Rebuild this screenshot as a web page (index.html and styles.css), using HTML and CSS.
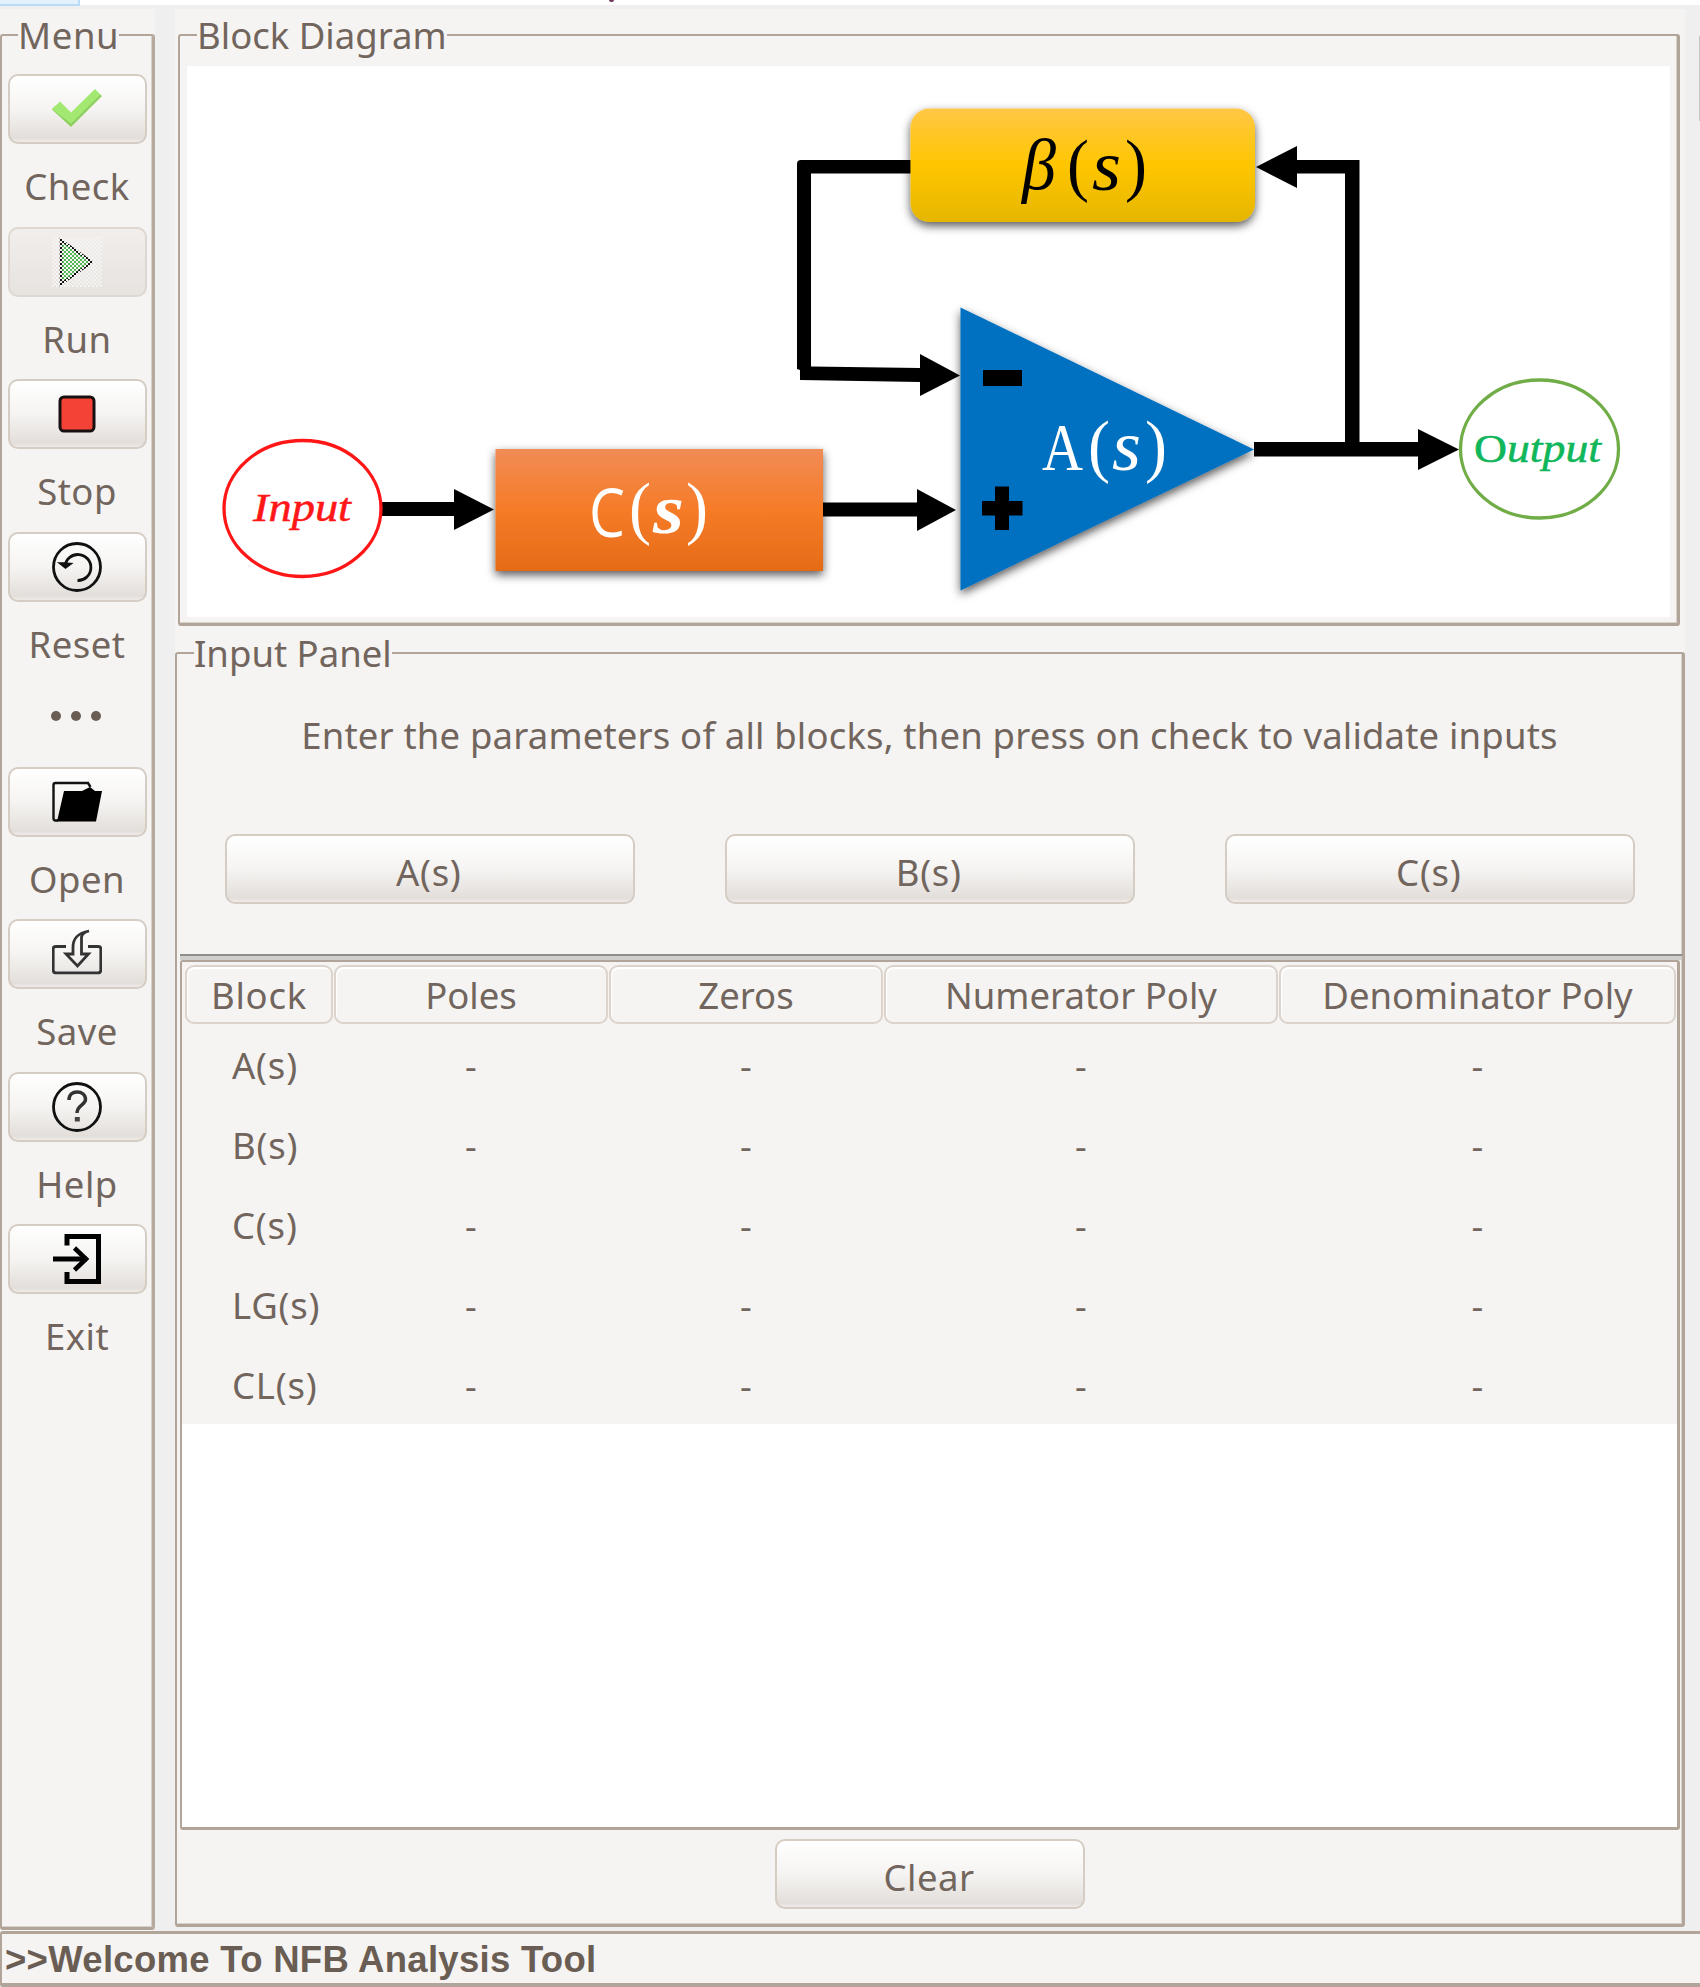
FILE: index.html
```html
<!DOCTYPE html>
<html lang="en">
<head>
<meta charset="utf-8">
<title>NFB Analysis Tool</title>
<link rel="stylesheet" href="styles.css">
</head>
<body>
<div class="app">
  <header class="tabbar"><span class="tab"></span><span class="tab-mark"></span></header>
  <div class="workspace">
    <aside class="side">
      <fieldset class="panel menu">
        <legend class="legend-menu">Menu</legend>
        <div class="item">
          <button class="btn"><svg width="50" height="50" viewBox="0 0 50 50"><path d="M19 43L50 12L46 9L19 35L3 22L0 25.500Z" fill="#8fcf62"/><path d="M0 25L8 17.500L19 28.500L43 5L48.500 10.500L19 39.500Z" fill="#a3e971"/></svg></button>
          <span>Check</span>
        </div>
        <div class="item">
          <button class="btn off"><svg width="50" height="50" viewBox="0 0 50 50"><defs><pattern id="dither" width="4" height="4" patternUnits="userSpaceOnUse"><path d="M0 0h2v2H0zM2 2h2v2H2z" fill="#f5f3f1"/></pattern></defs><path d="M9 3L40 25L9 47Z" fill="#52b956" stroke="#111" stroke-width="2.500"/><rect width="50" height="50" fill="url(#dither)"/></svg></button>
          <span>Run</span>
        </div>
        <div class="item">
          <button class="btn"><svg width="50" height="50" viewBox="0 0 50 50"><rect x="8" y="8" width="34" height="34" rx="4" fill="#f44336" stroke="#181010" stroke-width="3"/></svg></button>
          <span>Stop</span>
        </div>
        <div class="item">
          <button class="btn"><svg width="50" height="50" viewBox="0 0 50 50" fill="none" stroke="#111" stroke-width="2.800"><circle cx="25" cy="25" r="23.500"/><path d="M13 24A13 13 0 1 1 25.500 38.500"/><path d="M7 21L13.500 26L19.500 21.500L12.500 21Z" fill="#111" stroke-width="1.500"/></svg></button>
          <span>Reset</span>
        </div>
        <div class="dots"><i></i><i></i><i></i></div>
        <div class="item">
          <button class="btn"><svg width="50" height="50" viewBox="0 0 50 50"><path d="M6 43.500H3.500Q1.500 43.500 1.500 41.500V8Q1.500 6 3.500 6H36L38.500 10" fill="none" stroke="#111" stroke-width="2.400"/><path d="M12 14H30L38 10L43 14H50L44 44.500H5Z"/></svg></button>
          <span>Open</span>
        </div>
        <div class="item">
          <button class="btn"><svg width="50" height="50" viewBox="0 0 50 50" fill="none" stroke="#333" stroke-width="2.800"><path d="M14 17.500H4Q1.200 17.500 1.200 20V41Q1.200 43.800 4 43.800H46Q48.800 43.800 48.800 41V20Q48.800 17.500 46 17.500H36"/><path d="M37 2C27 4 21 8 21 18V25H14L25.500 37L36.500 25H29.500V8C30 5 33 3 37 2Z"/></svg></button>
          <span>Save</span>
        </div>
        <div class="item">
          <button class="btn"><svg width="50" height="50" viewBox="0 0 50 50" fill="none" stroke="#111"><circle cx="25" cy="25" r="23.500" stroke-width="2.800"/><path d="M17 18C17 12 21 10 25 10C30 10 33.500 13 33.500 17.500C33.500 23 25 23 25 31" stroke="#333" stroke-width="3.500"/><path d="M22.800 35h5v4.500h-5z" fill="#444" stroke="none"/></svg></button>
          <span>Help</span>
        </div>
        <div class="item">
          <button class="btn"><svg width="50" height="50" viewBox="0 0 50 50" fill="none" stroke="#000" stroke-width="5"><path d="M15 11.500V2.500H46.500V47.500H15V38"/><path d="M1 25H35"/><path d="M22.500 14L34 25L22.500 36" stroke-width="4.600"/></svg></button>
          <span>Exit</span>
        </div>
      </fieldset>
    </aside>
    <main class="main">
      <fieldset class="panel diagram">
        <legend class="legend-diagram">Block Diagram</legend>
        <svg class="canvas" width="1483" height="551" viewBox="187 66 1483 551">
          <defs>
            <linearGradient id="gOrange" x1="0" y1="0" x2="0" y2="1"><stop offset="0" stop-color="#f18c55"/><stop offset=".5" stop-color="#f67b28"/><stop offset="1" stop-color="#e56b17"/></linearGradient>
            <linearGradient id="gGold" x1="0" y1="0" x2="0" y2="1"><stop offset="0" stop-color="#ffc746"/><stop offset=".5" stop-color="#ffc600"/><stop offset="1" stop-color="#e5b600"/></linearGradient>
            <filter id="shadow" x="-10%" y="-15%" width="120%" height="140%"><feDropShadow dx="0" dy="4" stdDeviation="5" flood-color="#000" flood-opacity=".65"/></filter>
          </defs>
          <rect x="187" y="66" width="1483" height="551" fill="#fff"/>
          <path d="M382 502H454V489L494 509.500L454 530V516H382Z"/>
          <path d="M823 502.500H917V489L956 510L917 531V516.500H823Z"/>
          <path d="M911 160H801Q797 160 797 164V369L800 370V380L920 382V396L960 375.500L920 354V368L811 366.500V173.500H911Z"/>
          <path d="M1254 442H1345V173.500H1297V188L1256 167L1297 146V160H1359.500V442H1418V429L1459 449.500L1418 470V456.500H1254Z"/>
          <g filter="url(#shadow)"><rect x="495.500" y="449" width="327.500" height="122" fill="url(#gOrange)"/></g>
          <g filter="url(#shadow)"><rect x="910.500" y="108.500" width="344.500" height="113.500" rx="19" fill="url(#gGold)"/></g>
          <g filter="url(#shadow)"><path d="M960.500 307.500V590.500L1254 449.500Z" fill="#0070c0"/></g>
          <path d="M983 370H1022V386H983ZM982 501H995V486.500H1009V501H1022.500V515.500H1009V530H995V515.500H982Z"/>
          <ellipse cx="302.500" cy="508.500" rx="78.500" ry="68" fill="none" stroke="#ff1616" stroke-width="3.300"/>
          <ellipse cx="1539.500" cy="449" rx="79" ry="69" fill="none" stroke="#70ad47" stroke-width="3.300"/>
          <g class="math">
            <text class="io red" x="253" y="521" textLength="98" lengthAdjust="spacingAndGlyphs">Input</text>
            <text class="io green" x="1474" y="461.500" textLength="127" lengthAdjust="spacingAndGlyphs"><tspan class="roman">O</tspan>utput</text>
            <text class="it" x="1022" y="189" textLength="34" lengthAdjust="spacingAndGlyphs">β</text>
            <text class="par" x="1067" y="188" textLength="22" lengthAdjust="spacingAndGlyphs">(</text>
            <text class="it" x="1092" y="190" textLength="29" lengthAdjust="spacingAndGlyphs">s</text>
            <text class="par" x="1125" y="188" textLength="22" lengthAdjust="spacingAndGlyphs">)</text>
            <g fill="#fff">
              <text class="up" x="1042" y="470" textLength="41" lengthAdjust="spacingAndGlyphs">A</text>
              <text class="par" x="1088" y="469" textLength="22" lengthAdjust="spacingAndGlyphs">(</text>
              <text class="it" x="1112" y="470" textLength="29" lengthAdjust="spacingAndGlyphs">s</text>
              <text class="par" x="1145" y="469" textLength="22" lengthAdjust="spacingAndGlyphs">)</text>
              <text class="thin" x="589" y="536.500" textLength="36" lengthAdjust="spacingAndGlyphs">C</text>
              <text class="par" x="629" y="531" textLength="22" lengthAdjust="spacingAndGlyphs">(</text>
              <text class="bi" x="653" y="532.500" textLength="31" lengthAdjust="spacingAndGlyphs">s</text>
              <text class="par" x="686" y="531" textLength="22" lengthAdjust="spacingAndGlyphs">)</text>
            </g>
          </g>
        </svg>
      </fieldset>
      <fieldset class="panel input">
        <legend class="legend-input">Input Panel</legend>
        <p class="message">Enter the parameters of all blocks, then press on check to validate inputs</p>
        <div class="choices">
          <button class="btn">A(s)</button>
          <button class="btn">B(s)</button>
          <button class="btn">C(s)</button>
        </div>
        <div class="rule"></div>
        <div class="table">
          <div class="row head"><span>Block</span><span>Poles</span><span>Zeros</span><span>Numerator Poly</span><span>Denominator Poly</span></div>
          <div class="row"><span>A(s)</span><span>-</span><span>-</span><span>-</span><span>-</span></div>
          <div class="row"><span>B(s)</span><span>-</span><span>-</span><span>-</span><span>-</span></div>
          <div class="row"><span>C(s)</span><span>-</span><span>-</span><span>-</span><span>-</span></div>
          <div class="row"><span>LG(s)</span><span>-</span><span>-</span><span>-</span><span>-</span></div>
          <div class="row"><span>CL(s)</span><span>-</span><span>-</span><span>-</span><span>-</span></div>
        </div>
        <div class="footer"><button class="btn clear">Clear</button></div>
      </fieldset>
    </main>
    <div class="scroll"></div>
  </div>
  <footer class="status"><span>&gt;&gt;Welcome To NFB Analysis Tool</span></footer>
</div>
</body>
</html>
```
FILE: styles.css
```css
* { box-sizing: border-box; }
body { margin: 0; background: #efefef; }
.app {
  width: 1700px; height: 1987px; overflow: hidden;
  display: flex; flex-direction: column;
  font: 36.5px "Noto Sans", sans-serif; color: #71655d;
}
.tabbar { height: 9px; background: linear-gradient(#fff 4.500px, #efefef 5px); display: flex; }
.tab { width: 80px; height: 6px; background: #e3f1fd; border: solid #b9dcf7; border-width: 0 2px 2px 0; }
.tab-mark { width: 5px; height: 1.500px; margin-left: 529px; background: #6d3c5c; border-radius: 0 0 2px 2px; }
.workspace { height: 1922px; display: flex; }
.side { width: 155px; margin-right: 20px; background: #f5f4f2; padding-top: 1px; }
.main { width: 1510px; background: #f5f4f2; padding-top: 1px; height: 1918px; }
.scroll { width: 1px; height: 85px; margin: 27px 0 0 14px; background: #c4c4c4; }

.panel {
  margin: 0; padding: 0; min-width: 0;
  border: solid #b1a499; border-width: 2px 3px 3px 2px; border-radius: 3px;
  box-shadow: inset -1px -1px 0 #d8d1ca;
}
.panel > legend { padding: 0; line-height: 50px; height: 50px; white-space: nowrap; }
.menu { width: 155px; height: 1920px; border-right-color: #b5a99e; }
.legend-menu { margin-left: 16px; letter-spacing: .6px; }
.legend-diagram { margin-left: 17px; }
.legend-input { margin-left: 17px; }

.btn {
  display: flex; align-items: center; justify-content: center;
  height: 70px; margin: 0; padding: 0; font: inherit; color: inherit;
  border: 2px solid #d5ccc4; border-radius: 10px;
  background: linear-gradient(#fff, #f5f4f2 50%, #e3deda 94%, #efebe8);
  line-height: 66px;
}
.btn.off { background: linear-gradient(#f1eeec, #e7e3df); border-color: #ded7d1; }
.menu .item { height: 152.500px; display: flex; flex-direction: column; align-items: center; }
.menu .item:nth-of-type(1) { margin-top: 14px; }
.menu .item .btn { width: 139px; }
.menu .item span { line-height: 85px; height: 82px; letter-spacing: .5px; }
.dots { height: 82.500px; padding: 27px 2px 0 0; display: flex; justify-content: center; gap: 10px; }
.dots i { width: 10px; height: 10px; border-radius: 50%; background: #6a5d54; }

.diagram { width: 1502px; margin-left: 3px; height: 616px; }
.canvas { display: block; margin: 6px 0 0 7px; }
.math text { font-family: "Liberation Serif", serif; }
.math .io { font-size: 39px; font-style: italic; stroke-width: .5px; }
.math .roman { font-style: normal; }
.math .red { fill: #ff1616; stroke: #ff1616; }
.math .green { fill: #0fb65a; stroke: #0fb65a; }
.math .it { font-size: 72px; font-style: italic; }
.math .bi { font-size: 70px; font-style: italic; font-weight: bold; }
.math .up { font-size: 67px; }
.math .par { font-size: 70px; }
.math .thin { font-family: "Open Sans", sans-serif; font-weight: 400; font-size: 67px; }

.input { width: 1510px; height: 1299px; margin-top: 2px; }
.message { margin: 0; height: 156px; line-height: 114px; text-align: center; white-space: nowrap; letter-spacing: .17px; }
.choices { display: flex; gap: 90.500px; padding: 0 0 0 48px; height: 120px; }
.choices .btn { width: 409.500px; padding: 5px 2px 0 0; letter-spacing: .7px; }
.rule { height: 6px; margin: 0 0 0 3px; background: linear-gradient(#8e8e8c 2px, #cfcecb 2px); }
.table {
  height: 870px; width: 1500px; margin-left: 3px; background: #fff;
  border: solid #b1a499; border-width: 2px 3px 3px 2px; border-radius: 3px;
}
.row {
  height: 80px; display: grid; padding-left: 3px; background: #f5f4f2;
  grid-template-columns: 149px 275px 275px 395px 1fr;
  line-height: 82px; text-align: center;
}
.row span { padding-right: 1px; }
.row span:first-child { text-align: left; padding-left: 47px; letter-spacing: .8px; }
.row.head { height: 62px; padding-top: 3px; line-height: 58px; }
.row.head span, .row.head span:first-child {
  height: 59px; margin-right: 1px; padding: 0;
  border: 2px solid #dbd3cc; border-radius: 9px; box-shadow: inset 1px 2px 1px #fff;
  line-height: 57px; text-align: center;
}
.footer { display: flex; justify-content: center; padding: 9px 0 0; }
.clear { width: 310px; padding: 6px 1px 0 0; letter-spacing: .5px; }

.status {
  height: 56px; background: #f5f4f2;
  border: solid #b1a499; border-width: 3px 0 4px 2px; border-radius: 3px 0 0 3px;
  font: bold 36.500px/52px "Liberation Sans", sans-serif; padding-left: 3px; letter-spacing: .29px; color: #6a5d54;
}
```
